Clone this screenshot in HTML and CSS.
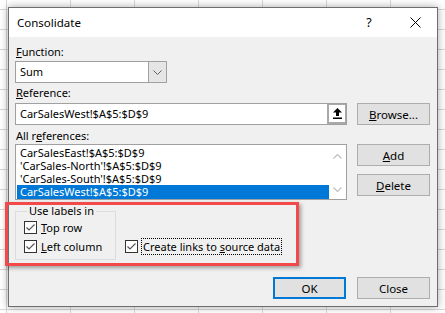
FILE: index.html
```html
<!DOCTYPE html>
<html lang="en">
<head>
  <meta charset="UTF-8">
  <meta name="viewport" content="width=device-width, initial-scale=1.0">
  <title>Consolidate</title>
  <link rel="stylesheet" href="styles.css">
</head>
<body>
  <div class="sheet">
    <div class="dialog">
      <div class="titlebar">
        <span class="title">Consolidate</span>
        <span class="help">?</span>
        <span class="close-x">
          <svg width="11" height="11" viewBox="0 0 11 11"><path d="M0.5 0.5 L10.5 10.5 M10.5 0.5 L0.5 10.5" stroke="#000" stroke-width="1"/></svg>
        </span>
      </div>

      <div class="body">
        <div class="field-label"><u>F</u>unction:</div>
        <div class="select">
          <span class="select-value">Sum</span>
          <span class="select-btn">
            <svg width="9" height="5" viewBox="0 0 9 5"><path d="M0.5 0.5 L4.5 4.5 L8.5 0.5" fill="none" stroke="#606060" stroke-width="1"/></svg>
          </span>
        </div>

        <div class="field-label ref-label"><u>R</u>eference:</div>
        <div class="ref-grid">
          <div class="ref-input">
            <span class="ref-value">CarSalesWest!$A$5:$D$9</span>
            <span class="collapse-btn">
              <svg width="9" height="11" viewBox="0 0 9 11"><path d="M4.5 0 L9 4.5 L6 4.5 L6 8 L3 8 L3 4.5 L0 4.5 Z" fill="#000"/><rect x="0" y="9.5" width="9" height="1.5" fill="#000"/></svg>
            </span>
          </div>
          <button class="btn"><u>B</u>rowse...</button>

          <div class="field-label all-label">All r<u>e</u>ferences:</div>
          <div></div>

          <div class="list">
            <div class="list-items">
              <div class="list-item">CarSalesEast!$A$5:$D$9</div>
              <div class="list-item">'CarSales-North'!$A$5:$D$9</div>
              <div class="list-item">'CarSales-South'!$A$5:$D$9</div>
              <div class="list-item selected">CarSalesWest!$A$5:$D$9</div>
            </div>
            <div class="scrollbar">
              <svg width="9" height="5" viewBox="0 0 9 5"><path d="M0.5 4.5 L4.5 0.5 L8.5 4.5" fill="none" stroke="#c2c2c2" stroke-width="1.2"/></svg>
              <svg width="9" height="5" viewBox="0 0 9 5"><path d="M0.5 0.5 L4.5 4.5 L8.5 0.5" fill="none" stroke="#c2c2c2" stroke-width="1.2"/></svg>
            </div>
          </div>
          <div class="btn-stack">
            <button class="btn"><u>A</u>dd</button>
            <button class="btn"><u>D</u>elete</button>
          </div>
        </div>

        <div class="options">
          <fieldset class="labels-group">
            <legend>Use labels in</legend>
            <label class="check">
              <span class="box"><svg width="11" height="11" viewBox="0 0 11 11"><path d="M1.5 5.5 L4 8 L9.5 2.5" fill="none" stroke="#555" stroke-width="1.2"/></svg></span>
              <span><u>T</u>op row</span>
            </label>
            <label class="check">
              <span class="box"><svg width="11" height="11" viewBox="0 0 11 11"><path d="M1.5 5.5 L4 8 L9.5 2.5" fill="none" stroke="#555" stroke-width="1.2"/></svg></span>
              <span><u>L</u>eft column</span>
            </label>
          </fieldset>
          <label class="check links">
            <span class="box"><svg width="11" height="11" viewBox="0 0 11 11"><path d="M1.5 5.5 L4 8 L9.5 2.5" fill="none" stroke="#555" stroke-width="1.2"/></svg></span>
            <span class="focus">Create links to <u>s</u>ource data</span>
          </label>
        </div>

        <div class="footer">
          <button class="btn default">OK</button>
          <button class="btn">Close</button>
        </div>
      </div>
    </div>

    <div class="callout"></div>
  </div>
</body>
</html>
```

FILE: styles.css
```css
body {
  margin: 0;
  font-family: "Noto Sans", "Open Sans", sans-serif;
  font-size: 11px;
  color: #000;
}

.sheet {
  position: relative;
  width: 445px;
  height: 313px;
  overflow: hidden;
  background-color: #fff;
  background-image:
    linear-gradient(to right, #d8d8d8 1px, transparent 1px),
    linear-gradient(to bottom, #d8d8d8 1px, transparent 1px);
  background-size: 64px 20px;
  background-position: 6px 9px;
  padding: 7px 0 0 8px;
  box-sizing: border-box;
}

.dialog {
  width: 430px;
  height: 300px;
  box-sizing: border-box;
  border: 1px solid #6e6e6e;
  background: #f0f0f0;
  box-shadow: 0 0 8px rgba(0, 0, 0, 0.35);
  display: flex;
  flex-direction: column;
}

.titlebar {
  height: 29px;
  background: #fff;
  display: flex;
  align-items: center;
  padding-left: 8px;
}

.title {
  flex: 1;
  font-size: 11.5px;
}

.help {
  width: 20px;
  text-align: center;
  font-size: 12.5px;
}

.close-x {
  width: 26px;
  margin: 0 9px 0 23px;
  display: flex;
  justify-content: center;
}

.body {
  flex: 1;
  padding: 7px 7px 7px 6px;
  display: flex;
  flex-direction: column;
}

.field-label {
  line-height: 16px;
  padding-left: 1px;
}

u {
  text-decoration-thickness: 1px;
  text-underline-offset: 1px;
}

.select {
  margin-top: 1px;
  width: 152px;
  height: 22px;
  box-sizing: border-box;
  border: 1px solid #a0a0a0;
  background: #fff;
  display: flex;
}

.select-value {
  flex: 1;
  padding-left: 4px;
  line-height: 20px;
}

.select-btn {
  width: 17px;
  background: #e5e5e5;
  border-left: 1px solid #a0a0a0;
  display: flex;
  align-items: center;
  justify-content: center;
}

.ref-label {
  margin-top: 2px;
}

.ref-grid {
  margin-top: 2px;
  display: grid;
  grid-template-columns: 332px 73px;
  column-gap: 10px;
}

.ref-input {
  height: 22px;
  box-sizing: border-box;
  border: 1px solid #a0a0a0;
  background: #fff;
  display: flex;
}

.ref-value {
  flex: 1;
  padding-left: 4px;
  line-height: 20px;
}

.collapse-btn {
  width: 19px;
  box-sizing: border-box;
  border: 2px solid #a9a9a9;
  border-right-width: 1px;
  border-top-width: 1px;
  background: #fff;
  display: flex;
  align-items: center;
  justify-content: center;
}

.btn {
  height: 22px;
  width: 73px;
  padding: 0;
  box-sizing: border-box;
  border: 1px solid #adadad;
  background: #e1e1e1;
  font-family: inherit;
  font-size: 11.5px;
  color: #000;
}

.btn.default {
  border: 2px solid #0078d7;
}

.all-label {
  margin-top: 3px;
}

.list {
  height: 56px;
  box-sizing: border-box;
  border: 1px solid #a0a0a0;
  background: #fff;
  display: flex;
}

.list-items {
  flex: 1;
  padding: 1px 0 0 1px;
}

.list-item {
  height: 13px;
  line-height: 13px;
  padding-left: 3px;
  white-space: nowrap;
}

.list-item.selected {
  height: 14px;
  line-height: 14px;
  background: #0078d7;
  color: #fff;
}

.scrollbar {
  width: 17px;
  display: flex;
  flex-direction: column;
  align-items: center;
  justify-content: space-between;
  padding: 9px 0 7px;
}

.btn-stack {
  display: flex;
  flex-direction: column;
  gap: 8px;
}

.options {
  margin-top: 4px;
  display: flex;
  align-items: flex-end;
}

.labels-group {
  margin: 0;
  width: 101px;
  box-sizing: border-box;
  border: 1px solid #dcdcdc;
  padding: 0 0 3px 8px;
}

.labels-group legend {
  padding: 0 2px;
  margin-left: 3px;
  line-height: 14px;
}

.check {
  display: flex;
  align-items: center;
  gap: 4px;
  height: 19px;
}

.box {
  width: 13px;
  height: 13px;
  box-sizing: border-box;
  border: 1px solid #333;
  background: #fff;
  display: flex;
  align-items: center;
  justify-content: center;
}

.links {
  margin: 0 0 4px 9px;
}

.focus {
  outline: 1px dotted #000;
  outline-offset: 0;
  padding: 0 1px;
  line-height: 15px;
}

.footer {
  margin-top: auto;
  display: flex;
  justify-content: flex-end;
  gap: 11px;
}

.callout {
  position: absolute;
  left: 5px;
  top: 202px;
  width: 294px;
  height: 64px;
  box-sizing: border-box;
  border: 3px solid #f24a4a;
  box-shadow: 2px 2px 4px rgba(0, 0, 0, 0.35);
}
```
